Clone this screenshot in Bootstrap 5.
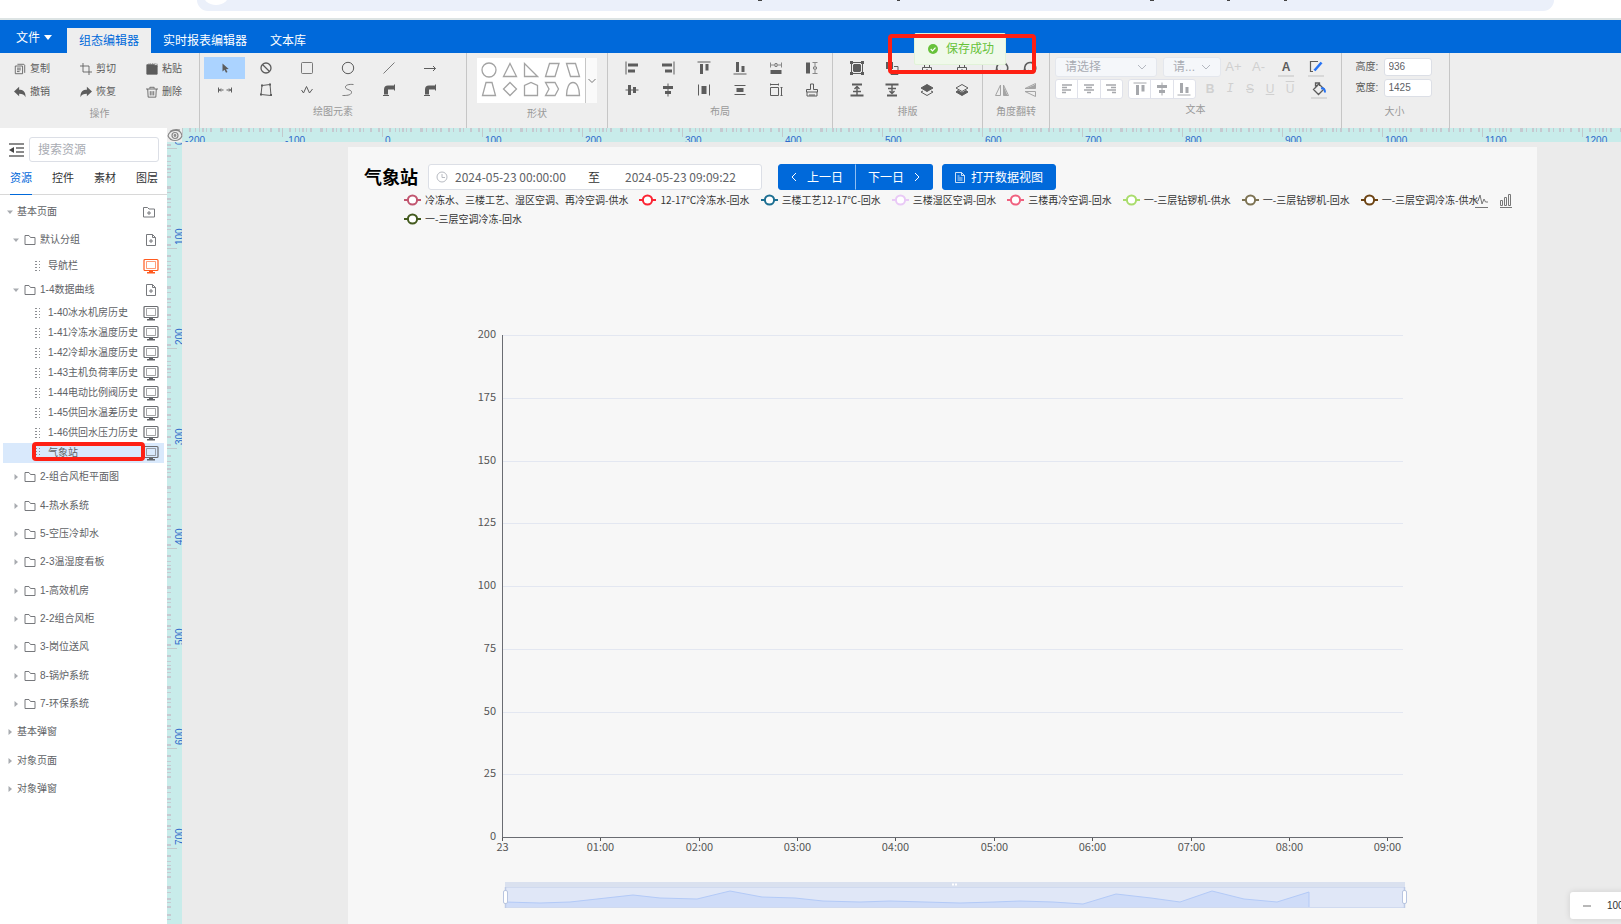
<!DOCTYPE html>
<html lang="zh-CN">
<head>
<meta charset="utf-8">
<meta name="viewport" content="width=device-width, initial-scale=1">
<title>组态编辑器</title>
<link href="https://cdn.jsdelivr.net/npm/bootstrap@5.3.0/dist/css/bootstrap.min.css" rel="stylesheet">
<style>
:root{--brand:#0069da;--ink:#606266;--mute:#999;--mark-red:#fe2014}
body{font-family:"Liberation Sans","Noto Sans CJK SC",sans-serif;font-size:10px;line-height:20px;color:var(--ink);background:#ebebeb}
button,input,select{font-family:inherit}
svg{display:block;flex:none}
.ic{width:14px;height:14px;fill:none;stroke:currentColor;stroke-width:1}
/* browser strip */
.browser-strip{height:20px;background:#fff;border-bottom:2px solid #dde4e4}
.address{height:11px;margin:0 67px 0 197px;background:#ebf0fa;border-radius:0 0 14px 14px;overflow:hidden}
/* header */
.app-bar{height:33px;background:var(--brand);font-size:12px;color:#fff}
.app-bar a,.file-btn{color:#fff;text-decoration:none;line-height:26px;height:25px;padding:0 12px}
.app-bar a.active{background:#eee;color:var(--brand)}
.app-bar a:last-child{padding-left:11px}
.file-btn{border:0;background:none;width:67px;padding:3px 0 0 16px;height:33px;line-height:30px;text-align:left}
.file-btn::after{border-width:5px 4px 0;margin-left:4px;vertical-align:2px}
/* ribbon */
.ribbon{height:75px;background:#eee;overflow:hidden}
.tool-group{flex:none;border-right:1px solid #c6c6c6;padding-top:4px;display:flex;flex-direction:column;align-items:center;color:#5c5c5c}
.g-label{color:var(--mute);line-height:22px}
.tools{display:grid;grid-auto-rows:22px}
.tools button,.flat{border:0;background:none;padding:0;color:inherit;display:flex;align-items:center;justify-content:center}
.tools button.on{background:#abd3ff}
.ops{grid-template-columns:66px 66px 52px;grid-auto-rows:23px;margin-left:14px;align-self:flex-start}
.ops button{justify-content:flex-start;gap:4px}
.ops .ic{width:12px;height:12px}
.draw-tools{grid-template-columns:repeat(6,41px);margin-left:4px;align-self:flex-start}
.shape-box{width:120px;height:45px;background:#fff}
.shape-grid{grid-template-columns:repeat(5,21px);grid-auto-rows:19px;padding:2px 0 0 1px;width:108px;color:#a3a3a3}
.shape-grid .ic{width:16px;height:16px;stroke-width:1.3}
.shape-more{width:12px;background:#fafafa;border-left:1px solid #c6c6c6!important}
.form-select.mini{height:20px;font-size:12px;line-height:16px;padding:0 20px 0 9px;color:#a8abb2;background-color:#f5f7fa;border-color:#e4e7ed;border-radius:3px;background-position:right 9px center;background-size:10px;opacity:1;
--bs-form-select-bg-img:url("data:image/svg+xml,%3csvg xmlns='http://www.w3.org/2000/svg' viewBox='0 0 10 10'%3e%3cpath fill='none' stroke='%23b4b8c0' d='M1 3l4 4 4-4'/%3e%3c/svg%3e");background-image:var(--bs-form-select-bg-img)}
.text-row{padding-left:5px}
.seg{height:20px;width:68px;background:#fff;border:1px solid #e0e2ea;border-radius:3px;color:#a6a8ac}
.seg button{flex:1}
.seg button+button{border-left:1px solid #e0e2ea}
.txt{width:20px;height:20px;font-size:12px;color:#d0d0d0}
.wide{width:25px;font-size:13px}
.bar{width:30px;height:20px;position:relative}
.bar::after{content:"";position:absolute;left:7px;right:7px;bottom:0;height:2px;background:#d8d8d8}
.size-in{width:48px;height:18px;border:1px solid #dcdfe6;border-radius:3px;padding:0 4px;font-size:10px;color:var(--ink);background:#fff}
/* toast and markers */
.toast-ok{top:33px;left:914px;width:92px;height:32px;padding-left:13px;background:#f0f9eb;border:1px solid #e1f3d8;color:#67c23a;font-size:12px;border-radius:2px;z-index:5}
.redbox{border:4px solid var(--mark-red);border-radius:4px;pointer-events:none;z-index:6}
.red-toast{left:888px;top:34px;width:148px;height:40px}
.red-node{left:29px;top:-1px;width:113px;height:19px}
/* sidebar */
.side{width:167px;background:#fff;flex:none}
.side-top{margin:1px 8px 0 1px}
.search{height:25px;font-size:12px;border:1px solid #dcdfe6;border-radius:3px;padding:0 8px;color:var(--ink)}
.search::placeholder{color:#a8abb2}
.side-tabs{border-bottom:1px solid #d8d8d8;gap:20px;padding:0 10px;font-size:11px}
.side-tabs a{color:#303133;text-decoration:none;line-height:32px;height:33px;margin-bottom:-1px;white-space:nowrap}
.side-tabs a.active{color:var(--brand);border-bottom:1px solid var(--brand)}
.tree{list-style:none;margin:0;padding:3px 0 0}
.tree li{display:flex;align-items:center;height:28px;padding:0 8px 0 7px;position:relative;white-space:nowrap}
.tree li a{color:inherit;text-decoration:none;margin-left:4px;flex:1}
.tree li.l2{padding-left:13px}
.tree li.leaf{height:20px;padding-left:32px;margin:0 3px;padding-right:5px}
.tree li.nav-leaf{height:24px}
.tree li.open2{height:23px;margin-bottom:2px}
.tree li.tall{height:29px}
.tree li.sel{background:#d9e9fc}
.tree .arr{width:6px;height:6px;fill:#a8abb0;stroke:none}
.tree .fold{width:12px;height:12px;margin-left:5px;stroke:#77797d}
.tree .grip{width:6px;height:10px;fill:#8b8d91;stroke:none}
.tree .leaf a{margin-left:7px}
.tree .scr{width:16px;height:16px;stroke:#6a6c70}
/* rulers */
.ruler{background:#c8ecea}
.ruler text{font-size:10px;fill:#2f6acb}
.eye-cell{width:15px;height:14px;background:#eee;color:#888}
/* page */
.stage{margin:5px 84px 0 166px;background:#f7f7f7;font-family:"Noto Sans CJK SC",sans-serif;color:#333}
.stage h1{font-size:18px;line-height:24px;font-weight:700;color:#000;width:64px}
.range{width:334px;height:26px;background:#fff;border:1px solid #dcdfe6;border-radius:3px;font-size:12px;padding-left:7px}
.range input{width:112px;border:0;padding:0;background:none;color:var(--ink);outline:0}
.btn-main{--bs-btn-bg:var(--brand);--bs-btn-color:#fff;--bs-btn-hover-bg:#1c7be5;--bs-btn-hover-color:#fff;--bs-btn-font-size:12px;--bs-btn-line-height:24px;--bs-btn-padding-y:0px;--bs-btn-padding-x:12px;--bs-btn-border-color:var(--brand);--bs-btn-border-radius:3px;display:flex;align-items:center;gap:6px;height:26px;white-space:nowrap}
.btn-main+.btn-main{border-left-color:#8fbef2}
.legend-list{padding:0 50px 1px 56px;column-gap:11px;line-height:19px}
.legend-list span{display:flex;align-items:center;gap:4px;white-space:nowrap}
.chart-tools{top:46px;right:25px;gap:11px;color:#777}
.chart text{font-size:11px;fill:#555}
.zoomer{right:-59px;bottom:5px;width:110px;height:27px;background:#fff;border-radius:3px;box-shadow:0 0 6px rgba(0,0,0,.12);color:#333;padding-left:7px}
</style>
</head>
<body class="vh-100 overflow-hidden d-flex flex-column position-relative">
<svg width="0" height="0" class="position-absolute">
<symbol id="copy" viewBox="0 0 14 14"><path d="M4 1.500h7.500l1 1v9M1.500 3.500h8.500v9h-8.500zM3.500 6h4.500M3.500 8h4.500M3.500 10h3"/></symbol>
<symbol id="crop" viewBox="0 0 14 14"><path d="M3.500 0v10.500h10.500M0 3.500h10.500v10.500"/></symbol>
<symbol id="paste" viewBox="0 0 14 14"><path fill="currentColor" d="M1 2h9v1h3v10h-12z"/><path stroke-dasharray="1 1" d="M3 1h10v3"/></symbol>
<symbol id="undo" viewBox="0 0 14 14"><path fill="currentColor" stroke="none" d="M6 1v3.500c4.500 0 7.500 2 7.500 8.500-1.500-3.200-3.500-4-7.500-4V12L0 6.500z"/></symbol>
<symbol id="redo" viewBox="0 0 14 14"><path fill="currentColor" stroke="none" d="M8 1v3.500C3.500 4.500.500 6.500.500 13 2 9.800 4 9 8 9v3l6-5.500z"/></symbol>
<symbol id="trash" viewBox="0 0 14 14"><path d="M0 3.500h14M4.500 3V1.500h5V3M2 3.500l.500 9.500h9l.500-9.500M5 6v5M7 6v5M9 6v5"/></symbol>
<symbol id="cursor" viewBox="0 0 14 14"><path fill="currentColor" stroke="none" d="M4.500 2.500v8l2-1.700 1.500 3 1.500-.800-1.500-2.800 2.700-.200z"/></symbol>
<symbol id="ban" viewBox="0 0 14 14"><circle cx="7" cy="7" r="5" stroke-width="1.300"/><path stroke-width="1.300" d="M3.500 3.500l7 7"/></symbol>
<symbol id="rect" viewBox="0 0 14 14"><rect x="1.500" y="1.500" width="11" height="11" rx="1" opacity=".8"/></symbol>
<symbol id="circ" viewBox="0 0 14 14"><circle cx="7" cy="7" r="5.700"/></symbol>
<symbol id="line" viewBox="0 0 14 14"><path d="M1.500 12.500l11-11" opacity=".8"/></symbol>
<symbol id="arrow" viewBox="0 0 14 14"><path d="M1 7.500h11.500M10 5l2.500 2.500L10 10"/></symbol>
<symbol id="dim" viewBox="0 0 14 14"><path d="M.500 4.500v5M13.500 4.500v5M1 7h4.500M8.500 7H13M3 5.500L1.500 7 3 8.500M11 5.500L12.500 7 11 8.500"/></symbol>
<symbol id="poly" viewBox="0 0 14 14"><path d="M3 2.500l8-1 1 11-10-1z"/><path stroke-width="2" d="M2 2.500h2M10 1.500h2M11 12h2M1 11.500h2"/></symbol>
<symbol id="zig" viewBox="0 0 14 14"><path d="M1.500 7l2 3L6.500 3.500l3 6.500 3-4"/></symbol>
<symbol id="curve" viewBox="0 0 14 14"><path stroke-width=".8" d="M12.500 1.500C8 1 4 2 4.500 4.500S11 6.500 10.500 9.500 5 12.500 1.500 12.500"/></symbol>
<symbol id="pipe" viewBox="0 0 14 14"><path stroke-width="4" d="M4 11.500V6.500q0-2 2-2h6"/><path d="M1 12.500h6M12.500 1.500v6"/></symbol>
<symbol id="al" viewBox="0 0 14 14"><path d="M1 .500v13"/><path stroke-width="3" d="M3 4h10M3 10h7"/></symbol>
<symbol id="at" viewBox="0 0 14 14"><path d="M.500 1h13"/><path stroke-width="3" d="M4.500 3v10M10 3v6.500"/></symbol>
<symbol id="ac" viewBox="0 0 14 14"><path d="M.500 7h13"/><path stroke-width="3" d="M4.500 2v10M9.500 4v6"/></symbol>
<symbol id="dh" viewBox="0 0 14 14"><path d="M1.500 1.500v11M12.500 1.500v11"/><path stroke-width="5" d="M7 3v8"/></symbol>
<symbol id="eqw" viewBox="0 0 14 14"><path stroke-width="4" d="M1.500 11h11"/><path d="M1.500 1.500v5M12.500 1.500v5M2 4h4M8 4h4M6 2.500h2v3H6z" stroke-width=".7"/></symbol>
<symbol id="eqb" viewBox="0 0 14 14"><path d="M1.500 4.500h8v8h-8zM1.500 .500v2M9.500 .500v2M1.500 1.500h8M12.500 4.500v8M11.500 4.500h2M11.500 12.500h2"/></symbol>
<symbol id="brush" viewBox="0 0 14 14"><path d="M5.500 1h3v5.500h4V9h-11V6.500h4zM2 9v4h10V9M5 13v-2M7 13v-2M9 13v-2"/></symbol>
<symbol id="grp" viewBox="0 0 14 14"><path d="M1.500 1.500h11v11h-11z"/><path stroke="none" fill="currentColor" d="M4 3h6l1 1v6l-1 1H4l-1-1V4zM0 0h3v3H0zM11 0h3v3h-3zM0 11h3v3H0zM11 11h3v3h-3z"/></symbol>
<symbol id="ungrp" viewBox="0 0 14 14"><path stroke="none" fill="currentColor" d="M1 1h7v7H1z"/><path d="M9 5.500h4v8H6V9"/></symbol>
<symbol id="lock" viewBox="0 0 14 14"><path d="M2.500 6.500h9v6h-9zM4.500 6V4q2.500-3 5 0v2M7 8v3"/></symbol>
<symbol id="vt" viewBox="0 0 14 14"><path stroke-width="2" d="M2 1.500h10M.500 12.500h13"/><path stroke-width="1.400" d="M7 3v9M4.500 6L7 3.500 9.500 6M3 8.500h8"/></symbol>
<symbol id="lay" viewBox="0 0 14 14"><path fill="currentColor" d="M7 1.500L13 5 7 8.500 1 5z"/><path d="M3 8L1 9l6 3.500L13 9l-2-1"/></symbol>
<symbol id="lay2" viewBox="0 0 14 14"><path d="M7 1.500L13 5 7 8.500 1 5z"/><path fill="currentColor" d="M3 7.500L1 9l6 3.500L13 9l-2-1.500L7 10z"/></symbol>
<symbol id="rot" viewBox="0 0 14 14"><path stroke-width="1.600" d="M9.500 12A5.500 5.500 0 1 0 3 10.500M1 7.500l2 3 3-1"/></symbol>
<symbol id="flip" viewBox="0 0 14 14"><path d="M5.500 2v10.500h-5zM8.500 2v10.500h5z"/><path fill="currentColor" stroke="none" d="M8.500 3v9.500h4z"/></symbol>
<symbol id="tl" viewBox="0 0 14 14"><path stroke-width="1.300" d="M2 3h10M2 5.500h5M2 8h9M2 10.500h4"/></symbol>
<symbol id="tc" viewBox="0 0 14 14"><path stroke-width="1.300" d="M2 3h10M4 5.500h6M2 8h10M5 10.500h4"/></symbol>
<symbol id="edit" viewBox="0 0 14 14"><path stroke-width="1.200" d="M9 1.500H1.500v10H4"/><path stroke="#2673f5" stroke-width="2.600" d="M5.500 10.500L12.500 2.500"/></symbol>
<symbol id="bucket" viewBox="0 0 14 14"><path stroke-width="1.300" d="M4 4l3-2 5 5-5.500 5.500-5-5L6 3M3.500 4.500V1h4v3"/><path stroke="#2673f5" stroke-width="2" d="M9 6.500q4-1 4 4"/></symbol>
<symbol id="tri-r" viewBox="0 0 6 6"><path d="M1.500 0v6L5 3z"/></symbol>
<symbol id="tri-d" viewBox="0 0 6 6"><path d="M0 1.500h6L3 5z"/></symbol>
<symbol id="fold" viewBox="0 0 12 12"><path d="M1 1.500h4L6.500 3.500H11v7H1z"/></symbol>
<symbol id="foldadd" viewBox="0 0 12 12"><path d="M.500 1.500h4L6 3h5.500v8H.500zM6 5v4M4 7h4"/></symbol>
<symbol id="docadd" viewBox="0 0 12 12"><path d="M1.500.500h6L10.500 3.500v8h-9zM7.500.500v3h3M6 5v4M4 7h4"/></symbol>
<symbol id="scr" viewBox="0 0 16 16"><rect x="1" y="1.500" width="14" height="11" rx="1" stroke-width="1.200"/><path opacity=".6" d="M3.500 3.500h9v7h-9z"/><path fill="currentColor" stroke="none" d="M6 13h4v1h2v1.500H4V14h2z"/></symbol>
<symbol id="grip" viewBox="0 0 6 10"><path d="M0 0h2v1H0zM4 0h1v1H4zM0 3h2v1H0zM4 3h1v1H4zM0 6h2v1H0zM4 6h1v1H4zM0 9h2v1H0zM4 9h1v1H4z"/></symbol>
</svg>

<div class="browser-strip flex-shrink-0"><div class="address">
<svg width="100%" height="11"><ellipse cx="19" cy="-8" rx="14" ry="13" fill="#fff"/><path fill="#444" d="M561 0h4v1h-4zM700 0h3v1h-3zM953 0h4v1h-4zM1030 0h3v1h-3zM1087 0h3v1h-3z"/></svg>
</div></div>

<header class="app-bar d-flex align-items-end flex-shrink-0">
<button class="file-btn dropdown-toggle" type="button">文件</button>
<a class="active" href="#">组态编辑器</a><a href="#">实时报表编辑器</a><a href="#">文本库</a>
</header>

<div class="ribbon d-flex flex-shrink-0">
<div class="tool-group" style="width:200px"><div class="tools ops">
<button><svg class="ic"><use href="#copy"/></svg>复制</button><button><svg class="ic"><use href="#crop"/></svg>剪切</button><button><svg class="ic"><use href="#paste"/></svg>粘贴</button>
<button><svg class="ic"><use href="#undo"/></svg>撤销</button><button><svg class="ic"><use href="#redo"/></svg>恢复</button><button><svg class="ic"><use href="#trash"/></svg>删除</button>
</div><div class="g-label pt-0">操作</div></div>

<div class="tool-group" style="width:267px"><div class="tools draw-tools">
<button class="on" aria-label="选择"><svg class="ic"><use href="#cursor"/></svg></button><button><svg class="ic"><use href="#ban"/></svg></button><button><svg class="ic"><use href="#rect"/></svg></button><button><svg class="ic"><use href="#circ"/></svg></button><button><svg class="ic"><use href="#line"/></svg></button><button><svg class="ic"><use href="#arrow"/></svg></button>
<button><svg class="ic"><use href="#dim"/></svg></button><button><svg class="ic"><use href="#poly"/></svg></button><button><svg class="ic"><use href="#zig"/></svg></button><button><svg class="ic"><use href="#curve"/></svg></button><button><svg class="ic"><use href="#pipe"/></svg></button><button><svg class="ic"><use href="#pipe"/></svg></button>
</div><div class="g-label">绘图元素</div></div>

<div class="tool-group" style="width:141px;padding-top:5px"><div class="shape-box d-flex"><div class="tools shape-grid">
<button><svg class="ic" viewBox="0 0 16 16"><circle cx="8" cy="8" r="7"/></svg></button>
<button><svg class="ic" viewBox="0 0 16 16"><path d="M8 1.500L14.500 14.500h-13z"/></svg></button>
<button><svg class="ic" viewBox="0 0 16 16"><path d="M1.500 1.500v13h13z"/></svg></button>
<button><svg class="ic" viewBox="0 0 16 16"><path d="M5.500 1.500h9.500l-4 13H1.500z"/></svg></button>
<button><svg class="ic" viewBox="0 0 16 16"><path d="M1.500 1.500h9l4 13h-9z"/></svg></button>
<button><svg class="ic" viewBox="0 0 16 16"><path d="M5 1.500h6l3.500 13h-13z"/></svg></button>
<button><svg class="ic" viewBox="0 0 16 16"><path d="M8 1.500L14.500 8 8 14.500 1.500 8z"/></svg></button>
<button><svg class="ic" viewBox="0 0 16 16"><path d="M1.500 14.500V4.500L8 1.500l6.500 3v10z"/></svg></button>
<button><svg class="ic" viewBox="0 0 16 16"><path d="M1.500 1.500h9.500l3.500 6.500-3.500 6.500H1.500L5 8z"/></svg></button>
<button><svg class="ic" viewBox="0 0 16 16"><path d="M1.500 14.500C1.500 7 4 1.500 8 1.500s6.500 5.500 6.500 13z"/></svg></button>
</div><button class="flat shape-more" aria-label="更多"><svg width="8" height="6" fill="none" stroke="#777"><path d="M.500 1L4 4.500 7.500 1"/></svg></button></div><div class="g-label">形状</div></div>

<div class="tool-group" style="width:225px"><div class="tools" style="grid-template-columns:repeat(6,36px);margin-left:3px">
<button><svg class="ic"><use href="#al"/></svg></button><button><svg class="ic" viewBox="0 0 14 14"><g transform="rotate(180 7 7)"><path d="M1 .500v13"/><path stroke-width="3" d="M3 10h10M3 4h7"/></g></svg></button><button><svg class="ic"><use href="#at"/></svg></button><button><svg class="ic" viewBox="0 0 14 14"><path d="M.500 13h13"/><path stroke-width="3" d="M4.500 1v10M10 5v6"/></svg></button><button><svg class="ic"><use href="#eqw"/></svg></button><button><svg class="ic" viewBox="0 0 14 14"><use href="#eqw" width="14" height="14" transform="rotate(90 7 7)"/></svg></button>
<button><svg class="ic"><use href="#ac"/></svg></button><button><svg class="ic" viewBox="0 0 14 14"><path d="M7 .500v13"/><path stroke-width="3" d="M2 4.500h10M4 9.500h6"/></svg></button><button><svg class="ic"><use href="#dh"/></svg></button><button><svg class="ic" viewBox="0 0 14 14"><path d="M1.500 2.500h11M1.500 11.500h11"/><path stroke-width="4" d="M3.500 7h7"/></svg></button><button><svg class="ic"><use href="#eqb"/></svg></button><button><svg class="ic"><use href="#brush"/></svg></button>
</div><div class="g-label">布局</div></div>

<div class="tool-group" style="width:150px"><div class="tools" style="grid-template-columns:repeat(4,35px);margin-left:3px">
<button><svg class="ic"><use href="#grp"/></svg></button><button><svg class="ic"><use href="#ungrp"/></svg></button><button><svg class="ic"><use href="#lock"/></svg></button><button><svg class="ic"><use href="#lock"/></svg></button>
<button><svg class="ic"><use href="#vt"/></svg></button><button><svg class="ic" viewBox="0 0 14 14"><use href="#vt" width="14" height="14" transform="rotate(180 7 7)"/></svg></button><button><svg class="ic"><use href="#lay"/></svg></button><button><svg class="ic"><use href="#lay2"/></svg></button>
</div><div class="g-label">排版</div></div>

<div class="tool-group" style="width:67px"><div class="tools" style="grid-template-columns:repeat(2,28px)">
<button><svg class="ic"><use href="#rot"/></svg></button><button><svg class="ic"><use href="#rot"/></svg></button>
<button class="opacity-50"><svg class="ic"><use href="#flip"/></svg></button><button class="opacity-50"><svg class="ic" viewBox="0 0 14 14"><use href="#flip" width="14" height="14" transform="rotate(-90 7 7)"/></svg></button>
</div><div class="g-label">角度翻转</div></div>

<div class="tool-group" style="width:292px">
<div class="text-row d-flex w-100">
<select class="form-select mini" style="width:102px" aria-label="字体" disabled><option>请选择</option></select>
<select class="form-select mini" style="width:58px;margin-left:6px" aria-label="字号" disabled><option>请...</option></select>
<button class="flat txt wide">A+</button><button class="flat txt wide">A-</button>
<button class="flat bar fw-bold" style="font-size:12px">A</button><button class="flat bar"><svg class="ic"><use href="#edit"/></svg></button>
</div>
<div class="text-row d-flex w-100" style="margin-top:2px">
<div class="seg d-flex"><button class="flat"><svg class="ic"><use href="#tl"/></svg></button><button class="flat"><svg class="ic"><use href="#tc"/></svg></button><button class="flat"><svg class="ic" viewBox="0 0 14 14"><path stroke-width="1.300" d="M2 3h10M7 5.500h5M3 8h9M8 10.500h4"/></svg></button></div>
<div class="seg d-flex" style="margin-left:5px"><button class="flat"><svg class="ic"><use href="#at"/></svg></button><button class="flat"><svg class="ic" viewBox="0 0 14 14"><path d="M7 .500v13"/><path stroke-width="3" d="M2 4.500h10M4 9.500h6"/></svg></button><button class="flat"><svg class="ic" viewBox="0 0 14 14"><path d="M.500 13h13"/><path stroke-width="3" d="M4.500 1v10M10 5v6"/></svg></button></div>
<div class="d-flex ps-1 pe-1"><button class="flat txt fw-bold">B</button><button class="flat txt fst-italic" style="font-family:'Liberation Mono'">I</button><button class="flat txt text-decoration-line-through">S</button><button class="flat txt text-decoration-underline">U</button><button class="flat txt" style="text-decoration:overline">U</button></div>
<button class="flat bar"><svg class="ic"><use href="#bucket"/></svg></button>
</div>
<div class="g-label">文本</div></div>

<div class="tool-group" style="width:108px;padding:5px 4px 0 0"><div class="d-flex flex-column" style="gap:3px">
<div class="d-flex align-items-center"><label for="h" style="width:28px;line-height:18px">高度:</label><input id="h" class="size-in" value="936"></div>
<div class="d-flex align-items-center"><label for="w" style="width:28px;line-height:18px">宽度:</label><input id="w" class="size-in" value="1425"></div>
</div><div class="g-label" style="padding:4px 0 0 2px">大小</div></div>
</div>

<div class="toast-ok position-absolute d-flex align-items-center gap-2" role="status">
<svg width="10" height="10" viewBox="0 0 10 10"><circle cx="5" cy="5" r="5" fill="#67c23a"/><path d="M2.700 5l1.800 1.800 3-3.200" stroke="#fff" stroke-width="1.200" fill="none"/></svg><span class="text-nowrap">保存成功</span></div>
<div class="redbox red-toast position-absolute"></div>

<div class="d-flex flex-grow-1 overflow-hidden">
<aside class="side">
<div class="side-top d-flex align-items-center pt-2 ps-2">
<svg width="15" height="14" viewBox="0 0 15 14" fill="none" stroke="#666" stroke-width="1.500"><path d="M0 1h15M7 5h8M7 9h8M0 13h15"/><path d="M5 4v6L0 7z" fill="#444" stroke="none"/></svg>
<input class="search w-100" style="margin-left:5px" placeholder="搜索资源" aria-label="搜索资源"></div>
<nav class="side-tabs d-flex"><a class="active" href="#">资源</a><a href="#">控件</a><a href="#">素材</a><a href="#">图层</a></nav>
<ul class="tree">
<li><svg class="arr"><use href="#tri-d"/></svg><a href="#">基本页面</a><svg class="fold ic me-1"><use href="#foldadd"/></svg></li>
<li class="l2"><svg class="arr"><use href="#tri-d"/></svg><svg class="ic fold"><use href="#fold"/></svg><a href="#">默认分组</a><svg class="ic fold" style="margin-right:2px"><use href="#docadd"/></svg></li>
<li class="leaf nav-leaf"><svg class="grip"><use href="#grip"/></svg><a href="#">导航栏</a><svg class="ic scr" style="stroke:#ff5a1f;color:#ff5a1f"><use href="#scr"/></svg></li>
<li class="l2 open2"><svg class="arr"><use href="#tri-d"/></svg><svg class="ic fold"><use href="#fold"/></svg><a href="#">1-4数据曲线</a><svg class="ic fold" style="margin-right:2px"><use href="#docadd"/></svg></li>
<li class="leaf"><svg class="grip"><use href="#grip"/></svg><a href="#">1-40冰水机房历史</a><svg class="ic scr"><use href="#scr"/></svg></li>
<li class="leaf"><svg class="grip"><use href="#grip"/></svg><a href="#">1-41冷冻水温度历史</a><svg class="ic scr"><use href="#scr"/></svg></li>
<li class="leaf"><svg class="grip"><use href="#grip"/></svg><a href="#">1-42冷却水温度历史</a><svg class="ic scr"><use href="#scr"/></svg></li>
<li class="leaf"><svg class="grip"><use href="#grip"/></svg><a href="#">1-43主机负荷率历史</a><svg class="ic scr"><use href="#scr"/></svg></li>
<li class="leaf"><svg class="grip"><use href="#grip"/></svg><a href="#">1-44电动比例阀历史</a><svg class="ic scr"><use href="#scr"/></svg></li>
<li class="leaf"><svg class="grip"><use href="#grip"/></svg><a href="#">1-45供回水温差历史</a><svg class="ic scr"><use href="#scr"/></svg></li>
<li class="leaf"><svg class="grip"><use href="#grip"/></svg><a href="#">1-46供回水压力历史</a><svg class="ic scr"><use href="#scr"/></svg></li>
<li class="leaf sel"><svg class="grip"><use href="#grip"/></svg><a href="#">气象站</a><svg class="ic scr"><use href="#scr"/></svg><span class="redbox red-node position-absolute"></span></li>
<li class="l2"><svg class="arr"><use href="#tri-r"/></svg><svg class="ic fold"><use href="#fold"/></svg><a href="#">2-组合风柜平面图</a></li>
<li class="l2 tall"><svg class="arr"><use href="#tri-r"/></svg><svg class="ic fold"><use href="#fold"/></svg><a href="#">4-热水系统</a></li>
<li class="l2"><svg class="arr"><use href="#tri-r"/></svg><svg class="ic fold"><use href="#fold"/></svg><a href="#">5-空压冷却水</a></li>
<li class="l2"><svg class="arr"><use href="#tri-r"/></svg><svg class="ic fold"><use href="#fold"/></svg><a href="#">2-3温湿度看板</a></li>
<li class="l2 tall"><svg class="arr"><use href="#tri-r"/></svg><svg class="ic fold"><use href="#fold"/></svg><a href="#">1-高效机房</a></li>
<li class="l2"><svg class="arr"><use href="#tri-r"/></svg><svg class="ic fold"><use href="#fold"/></svg><a href="#">2-2组合风柜</a></li>
<li class="l2"><svg class="arr"><use href="#tri-r"/></svg><svg class="ic fold"><use href="#fold"/></svg><a href="#">3-岗位送风</a></li>
<li class="l2 tall"><svg class="arr"><use href="#tri-r"/></svg><svg class="ic fold"><use href="#fold"/></svg><a href="#">8-锅炉系统</a></li>
<li class="l2"><svg class="arr"><use href="#tri-r"/></svg><svg class="ic fold"><use href="#fold"/></svg><a href="#">7-环保系统</a></li>
<li><svg class="arr"><use href="#tri-r"/></svg><a href="#">基本弹窗</a></li>
<li class="tall"><svg class="arr"><use href="#tri-r"/></svg><a href="#">对象页面</a></li>
<li><svg class="arr"><use href="#tri-r"/></svg><a href="#">对象弹窗</a></li>
</ul>
</aside>

<div class="d-flex flex-column flex-shrink-0">
<div class="eye-cell"><svg width="15" height="14" viewBox="0 0 15 14" fill="none" stroke="#888" stroke-width="1.200"><path d="M1 8q1-5 7-5.500t7 5.500q-2 4.500-7 4.500T1 8M3 3.500Q7 .500 13 2"/><circle cx="8" cy="7.500" r="3"/><circle cx="8" cy="7.500" r=".8"/></svg></div>
<svg class="ruler flex-grow-1" id="vr" width="15" height="100"></svg>
</div>

<main class="d-flex flex-column flex-grow-1 position-relative overflow-hidden">
<svg class="ruler" id="hr" width="100%" height="14"></svg>
<section class="stage flex-grow-1 position-relative">
<div class="d-flex ps-3 pt-3"><div class="d-flex" style="margin-top:1px">
<h1 class="m-0 text-nowrap">气象站</h1>
<div class="range d-flex align-items-center"><svg width="12" height="12" viewBox="0 0 12 12" fill="none" stroke="#b8bbc2"><circle cx="6" cy="6" r="5"/><path d="M6 3v3.500h3"/></svg>
<input style="margin-left:7px" value="2024-05-23 00:00:00" aria-label="开始时间"><span class="text-center" style="width:54px">至</span><input class="ms-1" value="2024-05-23 09:09:22" aria-label="结束时间"></div>
<div class="btn-group ms-3"><button class="btn btn-main"><svg width="6" height="10" fill="none" stroke="#fff"><path d="M5 1L1 5l4 4"/></svg><span class="ps-1">上一日</span></button><button class="btn btn-main"><span class="pe-1">下一日</span><svg width="6" height="10" fill="none" stroke="#fff"><path d="M1 1l4 4-4 4"/></svg></button></div>
<button class="btn btn-main" style="margin-left:9px"><svg width="10" height="11" fill="none" stroke="#fff" stroke-width=".8"><path d="M.500.500h6l3 3v7h-9zM6.500.500v3h3M2.500 4h2M2.500 6h5M2.500 8h5"/></svg>打开数据视图</button>
</div></div>
<div class="legend-list d-flex flex-wrap" id="legend"></div>
<div class="chart-tools position-absolute d-flex">
<svg width="14" height="15" fill="none" stroke="#777"><path d="M0 8h3L5 2l2 9 2-5 1.500 3H13M0 14.500h13"/></svg>
<svg width="12" height="15" fill="none" stroke="#777"><path d="M.500 7.500h2v5h-2zM4.500 4.500h2v8h-2zM8.500 1.500h2v11h-2zM0 14.500h12"/></svg></div>
<svg class="chart w-100" id="chart" viewBox="0 0 1189 695" role="img" aria-label="历史曲线"></svg>
</section>
<div class="zoomer position-absolute d-flex align-items-center"><button class="flat" aria-label="缩小" style="width:20px"><svg width="8" height="2"><path fill="#b8b8b8" d="M0 0h8v2H0z"/></svg></button><span style="padding-left:10px">100%</span></div>
</main>
</div>

<script>
const legend = [["冷冻水、三楼工艺、湿区空调、再冷空调-供水","#c1556f"],["12-17℃冷冻水-回水","#fb2433"],["三楼工艺12-17℃-回水","#1d6f92"],["三楼湿区空调-回水","#e9c9f6"],["三楼再冷空调-回水","#f0617f"],["一-三层钻锣机-供水","#a9dc6c"],["一-三层钻锣机-回水","#7d7353"],["一-三层空调冷冻-供水","#6d4414"],["一-三层空调冷冻-回水","#435a1e"]];
document.getElementById("legend").innerHTML = legend.map(([t,c]) =>
 `<span><svg width="17" height="12"><path d="M0 6h17" stroke="${c}" stroke-width="2"/><circle cx="8.500" cy="6" r="4.600" fill="#fff" stroke="${c}" stroke-width="2"/></svg>${t}</span>`).join("");

// minor ruler ticks inside each 100-unit section: [offset, thickness]
const minor = [[7,2],[13,1],[17,1],[20,2],[24,1],[28,2],[38,3],[44,1],[50,2],[54,1],[58,2],[66,2],[71,1],[77,2],[81,1],[88,2],[96,2]];
let h = "", v = "";
for (let k = -1; k < 16; k++) {
  const x = k * 100;
  h += `<rect x="${x}" y="0" width="1" height="9" fill="#c3c9cc"/>` + minor.map(([o,w]) => `<rect x="${x+o}" y="0" width="${w}" height="4" fill="#c6c9d0"/>`).join("");
  if (k >= 0) h += `<text x="${x+3}" y="16">${(k-2)*100}</text>`;
  if (k > 8) continue;
  v += `<rect x="0" y="${x+6}" width="10" height="1" fill="#c3c9cc"/>` + minor.map(([o,w]) => `<rect x="0" y="${x+6+o}" width="4" height="${w}" fill="#c6c9d0"/>`).join("");
  if (k >= 0) v += `<text transform="translate(16 ${x+3}) rotate(-90)">${k*100}</text>`;
}
document.getElementById("hr").innerHTML = h;
document.getElementById("vr").innerHTML = v;

let c = "";
for (let i = 0; i <= 8; i++) {
  const y = Math.round(608 - i * 62.75);
  if (i) c += `<path d="M155 ${y}.5H1055" stroke="#e3e7f1"/>`;
  c += `<text x="148" y="${y+3}" text-anchor="end">${i*25}</text>`;
}
for (let i = 0; i < 10; i++) {
  const x = Math.round(154 + i * 98.37);
  c += `<path d="M${x}.5 608v4" stroke="#555"/><text x="${x+.5}" y="622" text-anchor="middle">${i ? "0"+i+":00" : "23"}</text>`;
}
c += `<path d="M154.500 106V608.500H1055" fill="none" stroke="#6a6c72"/>`;
const pts = [[157,673],[192,674],[222,673],[249,670],[285,666],[312,669],[349,670],[382,662],[414,668],[447,669],[475,672],[512,673],[542,672],[612,674],[646,673],[672,672],[705,673],[735,675],[768,665],[803,669],[832,673],[864,662],[896,670],[929,673],[961,663]].map(p => p.join(" ")).join("L");
c += `<rect x="157" y="653" width="900" height="26" fill="#e0e7f7"/><rect x="157" y="653" width="900" height="5" fill="#dae1ef"/>
<path d="M157 658.500H1057M157 678.500H1057" stroke="#d0daef"/><path d="M${pts}V678H157z" fill="#cfdcf8"/><path d="M${pts}V678" fill="none" stroke="#b3caf7"/>
<path d="M604 655.500h6" stroke="#fff" stroke-width="2" stroke-dasharray="2 1"/>
<path d="M157.500 658v21M1056.500 658v21" stroke="#becbe6" stroke-width="1.500"/><rect x="155.500" y="661.500" width="4" height="13" rx="1.500" fill="#fff" stroke="#b8c5e0"/><rect x="1054.500" y="661.500" width="4" height="13" rx="1.500" fill="#fff" stroke="#b8c5e0"/>`;
document.getElementById("chart").innerHTML = c;
</script>
<script src="https://cdn.jsdelivr.net/npm/bootstrap@5.3.0/dist/js/bootstrap.bundle.min.js"></script>
</body>
</html>
